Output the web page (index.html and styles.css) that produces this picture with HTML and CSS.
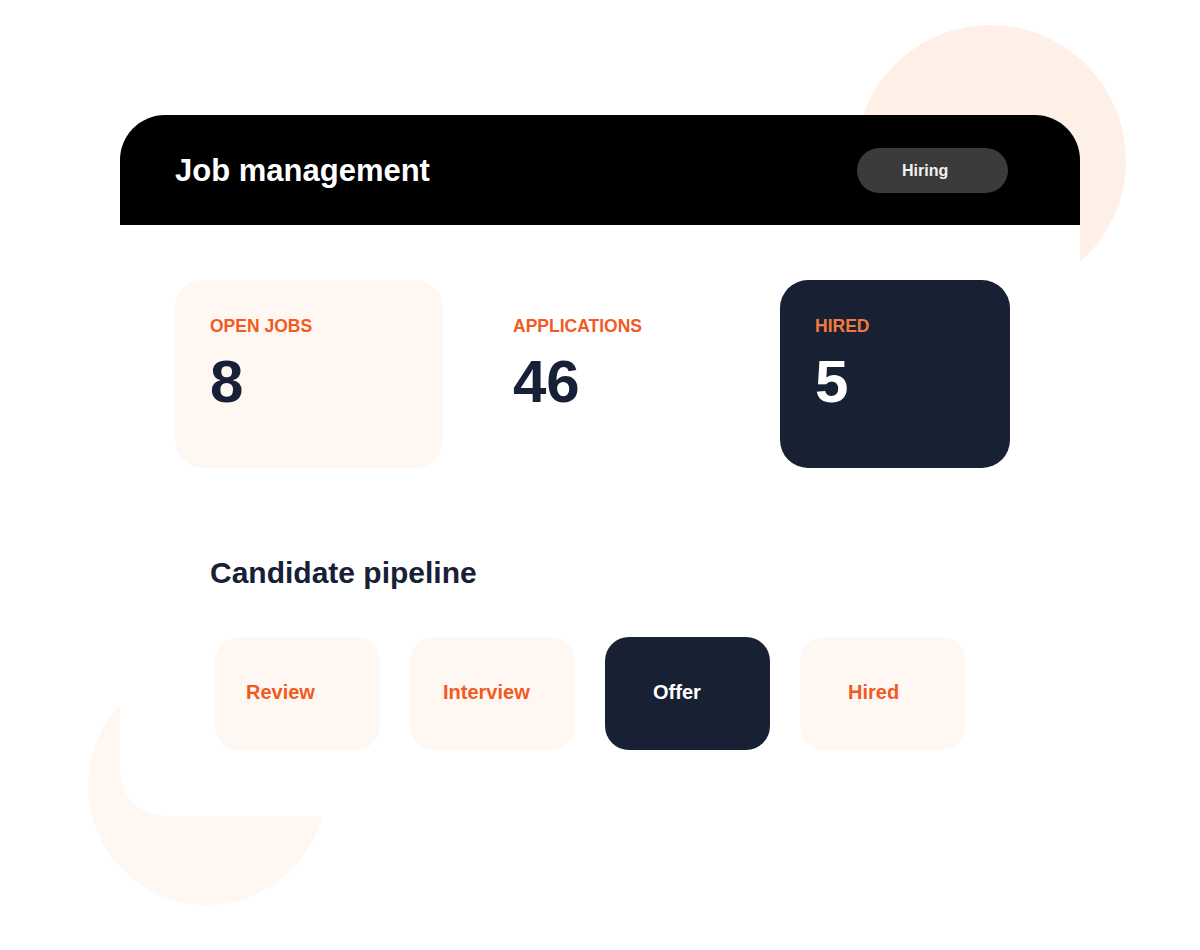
FILE: index.html
```html
<!DOCTYPE html>
<html lang="en">
<head>
<meta charset="utf-8">
<title>Job management</title>
<link rel="stylesheet" href="styles.css">
</head>
<body>
<div class="page">
  <div class="blob blob--top"></div>
  <div class="blob blob--bottom"></div>
  <main class="card">
    <header class="card-header">
      <h1 class="title">Job management</h1>
      <span class="pill">Hiring</span>
    </header>
    <section class="stats">
      <div class="stat stat--light">
        <div class="stat-label">OPEN JOBS</div>
        <div class="stat-value">8</div>
      </div>
      <div class="stat stat--plain">
        <div class="stat-label">APPLICATIONS</div>
        <div class="stat-value">46</div>
      </div>
      <div class="stat stat--dark">
        <div class="stat-label">HIRED</div>
        <div class="stat-value">5</div>
      </div>
    </section>
    <h2 class="section-title">Candidate pipeline</h2>
    <section class="pipeline">
      <div class="stage stage--review">Review</div>
      <div class="stage stage--interview">Interview</div>
      <div class="stage stage--active stage--offer">Offer</div>
      <div class="stage stage--hired">Hired</div>
    </section>
  </main>
</div>
</body>
</html>
```

FILE: styles.css
```css
* { box-sizing: border-box; }

html, body {
  margin: 0;
  padding: 0;
  background: #ffffff;
}

body {
  font-family: "Liberation Sans", Arial, Helvetica, sans-serif;
}

.page {
  position: relative;
  width: 1200px;
  height: 950px;
  overflow: hidden;
  padding-top: 115px;
  padding-left: 120px;
}

.blob {
  position: absolute;
  border-radius: 50%;
  z-index: 0;
}

.blob--top {
  left: 855px;
  top: 25px;
  width: 271px;
  height: 271px;
  background: #fff0e7;
}

.blob--bottom {
  left: 88px;
  top: 667px;
  width: 238px;
  height: 238px;
  background: #fff7f2;
}

.card {
  position: relative;
  z-index: 1;
  width: 960px;
  height: 701px;
  background: #ffffff;
  border-radius: 45px;
  overflow: hidden;
}

.card-header {
  height: 110px;
  background: #000000;
  display: flex;
  align-items: center;
  justify-content: space-between;
  padding: 0 72px 0 55px;
}

.title {
  margin: 0;
  color: #ffffff;
  font-size: 31px;
  font-weight: 700;
  line-height: 1.2;
  padding-top: 2px;
}

.pill {
  width: 151px;
  height: 45px;
  border-radius: 23px;
  background: #3b3b3b;
  color: #f2f2f2;
  font-size: 16px;
  font-weight: 700;
  display: flex;
  align-items: center;
  padding-left: 45px;
  padding-top: 1px;
}

.stats {
  display: grid;
  grid-template-columns: 268px 267px 230px;
  column-gap: 35px;
  margin: 55px 0 0 55px;
}

.stat {
  height: 188px;
  border-radius: 28px;
  padding: 36px 35px 0;
}

.stat--light { background: #fff7f2; }
.stat--plain { background: transparent; }
.stat--dark { background: #182033; }

.stat-label {
  font-size: 17.5px;
  font-weight: 700;
  line-height: 21px;
  color: #f25a23;
}

.stat--dark .stat-label { color: #f4793c; }

.stat-value {
  margin-top: 15px;
  font-size: 60px;
  font-weight: 700;
  line-height: 1;
  color: #172036;
}

.stat--dark .stat-value { color: #ffffff; }

.section-title {
  margin: 87px 0 0 90px;
  font-size: 30px;
  font-weight: 700;
  line-height: 36px;
  color: #172036;
}

.pipeline {
  display: flex;
  gap: 30px;
  margin: 46px 0 0 95px;
}

.stage {
  width: 165px;
  height: 113px;
  border-radius: 24px;
  background: #fff7f2;
  color: #f25a23;
  font-size: 20px;
  font-weight: 700;
  display: flex;
  align-items: center;
  padding-bottom: 2px;
}

.stage--review { padding-left: 31px; }
.stage--interview { padding-left: 33px; }
.stage--offer { padding-left: 48px; }
.stage--hired { padding-left: 48px; }

.stage--active {
  background: #182033;
  color: #ffffff;
}
```
